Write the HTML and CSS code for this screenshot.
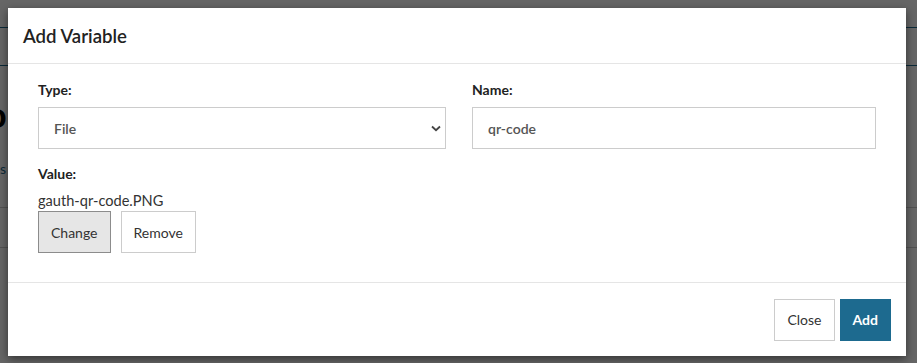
FILE: index.html
```html
<!DOCTYPE html>
<html lang="en">
<head>
    <meta charset="UTF-8">
    <title>Add Variable</title>
    <link rel="stylesheet" href="styles.css">
</head>
<body>

<!-- page behind the dialog -->
<div class="page">
    <div class="page-bar"></div>
    <div class="page-title">o</div>
    <div class="page-link">s</div>
    <div class="page-rule rule-a"></div>
    <div class="page-rule rule-b"></div>
</div>

<div class="backdrop"></div>

<div class="modal">
    <div class="modal-header">
        <h4>Add Variable</h4>
    </div>

    <div class="modal-body">
        <div class="row">
            <div class="field type-field">
                <label>Type:</label>
                <div class="select-wrap">
                    <select class="control">
                        <option>File</option>
                    </select>
                    <svg class="chevron" width="10" height="7" viewBox="0 0 10 7">
                        <path d="M1 1.5 L5 5.2 L9 1.5" fill="none" stroke="#444" stroke-width="1.8"/>
                    </svg>
                </div>
            </div>
            <div class="field name-field">
                <label>Name:</label>
                <input class="control" type="text" value="qr-code">
            </div>
        </div>

        <div class="field value-field">
            <label>Value:</label>
            <div class="file-name">gauth-qr-code.PNG</div>
            <div class="file-actions">
                <button class="btn btn-active">Change</button>
                <button class="btn">Remove</button>
            </div>
        </div>
    </div>

    <div class="modal-footer">
        <button class="btn">Close</button>
        <button class="btn btn-primary">Add</button>
    </div>
</div>

</body>
</html>
```

FILE: styles.css
```css
body {
    margin: 0;
    font-family: Lato, "Open Sans", sans-serif;
    font-size: 14px;
    color: #333;
    background: #fff;
    width: 917px;
    height: 363px;
    overflow: hidden;
    position: relative;
}

/* page behind */
.page {
    position: absolute;
    inset: 0;
}

.page-bar {
    position: absolute;
    left: 0;
    right: 0;
    top: 27px;
    height: 37px;
    border-top: 1px solid #1d6a8f;
    border-bottom: 1px solid #1d6a8f;
}

.page-title {
    position: absolute;
    left: -14px;
    top: 92px;
    font-size: 36px;
    font-weight: 700;
    color: #000;
}

.page-link {
    position: absolute;
    left: 0;
    top: 160px;
    color: #1d6a8f;
    font-size: 14px;
}

.page-rule {
    position: absolute;
    left: 0;
    right: 0;
    height: 1px;
    background: #ccc;
}

.rule-a { top: 207px; }
.rule-b { top: 247px; }

.backdrop {
    position: absolute;
    inset: 0;
    background: rgba(0, 0, 0, 0.6);
}

/* dialog */
.modal {
    position: absolute;
    left: 8px;
    top: 8px;
    width: 898px;
    height: 348px;
    background: #fff;
    box-shadow: 0 3px 9px rgba(0, 0, 0, 0.5);
    display: flex;
    flex-direction: column;
}

.modal-header {
    height: 56px;
    border-bottom: 1px solid #e5e5e5;
    padding: 0 15px;
    display: flex;
    align-items: center;
    box-sizing: border-box;
}

.modal-header h4 {
    margin: 0;
    font-size: 18.6px;
    font-weight: 600;
    color: #222;
}

.modal-body {
    padding: 16px 30px 0;
    height: 219px;
    box-sizing: border-box;
    border-bottom: 1px solid #e5e5e5;
}

.row {
    display: flex;
    gap: 26px;
}

.field {
    display: flex;
    flex-direction: column;
}

.type-field { width: 408px; }
.name-field { width: 404px; }

.field label {
    font-weight: 700;
    font-size: 14px;
    color: #222;
    margin-bottom: 7px;
    line-height: 20px;
}

.control {
    height: 42px;
    box-sizing: border-box;
    border: 1px solid #ccc;
    background: #fff;
    font-family: inherit;
    font-size: 14px;
    font-weight: 600;
    color: #555;
    padding: 0 15px;
    width: 100%;
    outline: none;
}

.select-wrap {
    position: relative;
}

.select-wrap select {
    appearance: none;
    border-radius: 0;
}

.chevron {
    position: absolute;
    right: 5px;
    top: 18px;
}

.value-field {
    margin-top: 15px;
}

.value-field label {
    margin-bottom: 8px;
}

.file-name {
    font-size: 14.6px;
    line-height: 18px;
    color: #333;
    margin-bottom: 1px;
}

.file-actions {
    display: flex;
    gap: 10px;
}

.btn {
    height: 42px;
    box-sizing: border-box;
    border: 1px solid #ccc;
    background: #fff;
    font-family: inherit;
    font-size: 14px;
    color: #333;
    padding: 0 12px;
    cursor: pointer;
}

.btn-active {
    background: #e6e6e6;
    border-color: #8c8c8c;
}

.btn-primary {
    background: #1d6a8f;
    border-color: #1d6a8f;
    color: #fff;
    font-weight: 700;
}

.modal-footer {
    flex: 1;
    display: flex;
    justify-content: flex-end;
    align-items: center;
    gap: 5px;
    padding: 0 15px;
}
```
